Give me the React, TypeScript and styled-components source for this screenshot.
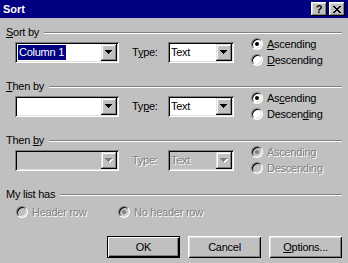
import { createGlobalStyle, styled } from 'styled-components';

const GlobalStyle = createGlobalStyle`
  html, body {
    margin: 0;
    padding: 0;
    background: #c0c0c0;
  }
  body {
    font-family: "Liberation Sans", Arial, sans-serif;
    font-size: 11px;
    letter-spacing: -0.25px;
    color: #000;
  }
`;

const Window = styled.div`
  width: 348px;
  height: 263px;
  background: #c0c0c0;
  display: flex;
  flex-direction: column;
  overflow: hidden;
`;

const TitleBar = styled.div`
  height: 18px;
  background: #000080;
  display: flex;
  align-items: center;
  padding: 0 3px 0 3px;
`;

const Title = styled.span`
  flex: 1;
  color: #fff;
  font-weight: bold;
  font-size: 11px;
  letter-spacing: 0;
`;

const TitleButtons = styled.div`
  display: flex;
  gap: 2px;
`;

const TitleButton = styled.div`
  width: 16px;
  height: 14px;
  background: #c0c0c0;
  display: flex;
  align-items: center;
  justify-content: center;
  font-weight: bold;
  font-size: 11px;
  line-height: 14px;
  box-shadow: inset -1px -1px #000, inset 1px 1px #fff, inset -2px -2px #808080, inset 2px 2px #dfdfdf;
`;

const Body = styled.div`
  display: flex;
  flex-direction: column;
  gap: 12px;
  padding: 8px 6px 0 6px;
`;

const Section = styled.section`
  display: flex;
  flex-direction: column;
`;

const Legend = styled.div`
  display: flex;
  align-items: center;
  height: 13px;
  line-height: 13px;

  &::after {
    content: '';
    flex: 1;
    margin-left: 5px;
    border-top: 1px solid #808080;
    border-bottom: 1px solid #fff;
  }
`;

const Key = styled.span`
  text-decoration: underline;
`;

const SortRow = styled.div`
  display: flex;
  align-items: center;
  height: 32px;
  margin-top: -3px;
  padding-left: 9px;
`;

const Combo = styled.div<{ $width: number; $disabled?: boolean; $gap: number }>`
  width: ${(p) => p.$width}px;
  height: 21px;
  margin-right: ${(p) => p.$gap}px;
  box-sizing: border-box;
  padding: 2px;
  display: flex;
  flex: none;
  background: ${(p) => (p.$disabled ? '#c0c0c0' : '#fff')};
  box-shadow: inset 1px 1px #808080, inset -1px -1px #fff, inset 2px 2px #000, inset -2px -2px #dfdfdf;
`;

const ComboText = styled.div<{ $disabled?: boolean }>`
  flex: 1;
  display: flex;
  align-items: center;
  padding-left: 1px;
  color: ${(p) => (p.$disabled ? '#808080' : '#000')};
  text-shadow: ${(p) => (p.$disabled ? '1px 1px 0 #fff' : 'none')};
`;

const Selected = styled.span`
  display: inline-flex;
  align-items: center;
  height: 15px;
  background: #000080;
  color: #fff;
  padding: 0 2px 0 1px;
`;

const DropButton = styled.div`
  width: 16px;
  height: 17px;
  background: #c0c0c0;
  display: flex;
  align-items: center;
  justify-content: center;
  box-shadow: inset -1px -1px #000, inset 1px 1px #dfdfdf, inset -2px -2px #808080, inset 2px 2px #fff;
`;

const FieldLabel = styled.span<{ $disabled?: boolean }>`
  width: 36px;
  flex: none;
  color: ${(p) => (p.$disabled ? '#808080' : '#000')};
  text-shadow: ${(p) => (p.$disabled ? '1px 1px 0 #fff' : 'none')};
`;

const RadioGroup = styled.div`
  display: flex;
  flex-direction: column;
`;

const RadioLine = styled.label<{ $disabled?: boolean; $width?: number }>`
  display: flex;
  align-items: center;
  gap: 4px;
  height: 16px;
  width: ${(p) => (p.$width ? `${p.$width}px` : 'auto')};
  color: ${(p) => (p.$disabled ? '#808080' : '#000')};
  text-shadow: ${(p) => (p.$disabled ? '1px 1px 0 #fff' : 'none')};
`;

const RadioMark = styled.span<{ $checked?: boolean; $disabled?: boolean }>`
  position: relative;
  width: 12px;
  height: 12px;
  flex: none;
  box-sizing: border-box;
  border-radius: 50%;
  border: 1px solid;
  border-color: #808080 #fff #fff #808080;
  background: ${(p) => (p.$disabled ? '#c0c0c0' : '#fff')};
  box-shadow: inset 1px 1px #000, inset -1px -1px #dfdfdf;

  &::after {
    content: '';
    display: ${(p) => (p.$checked ? 'block' : 'none')};
    position: absolute;
    left: 3px;
    top: 3px;
    width: 4px;
    height: 4px;
    border-radius: 50%;
    background: ${(p) => (p.$disabled ? '#808080' : '#000')};
  }
`;

const HeaderRow = styled.div`
  display: flex;
  margin-top: 3px;
  padding-left: 10px;
`;

const ButtonRow = styled.div`
  display: flex;
  justify-content: flex-end;
  gap: 8px;
  margin-top: 4px;
`;

const Button = styled.button<{ $default?: boolean }>`
  width: 73px;
  height: 22px;
  padding: 0;
  font: inherit;
  letter-spacing: inherit;
  color: #000;
  background: #c0c0c0;
  border: ${(p) => (p.$default ? '1px solid #000' : 'none')};
  box-shadow: ${(p) =>
    p.$default
      ? 'inset 1px 1px #fff, inset -1px -1px #000, inset -2px -2px #808080'
      : 'inset 1px 1px #fff, inset -1px -1px #000, inset 2px 2px #dfdfdf, inset -2px -2px #808080'};
`;

function Arrow({ disabled }: { disabled?: boolean }) {
  const d = 'M0 0h7v1H0zM1 1h5v1H1zM2 2h3v1H2zM3 3h1v1H3z';
  return (
    <svg width="8" height="5" viewBox="0 0 8 5" shapeRendering="crispEdges">
      {disabled && <path d={d} fill="#fff" transform="translate(1 1)" />}
      <path d={d} fill={disabled ? '#808080' : '#000'} />
    </svg>
  );
}

function CloseGlyph() {
  return (
    <svg width="8" height="7" viewBox="0 0 8 7" shapeRendering="crispEdges">
      <path
        d="M0 0h2v1H0zM6 0h2v1H6zM1 1h2v1H1zM5 1h2v1H5zM2 2h4v1H2zM3 3h2v1H3zM2 4h4v1H2zM1 5h2v1H1zM5 5h2v1H5zM0 6h2v1H0zM6 6h2v1H6z"
        fill="#000"
      />
    </svg>
  );
}

function Mnemonic({ text, at }: { text: string; at: number }) {
  if (at < 0) return <>{text}</>;
  return (
    <>
      {text.slice(0, at)}
      <Key>{text[at]}</Key>
      {text.slice(at + 1)}
    </>
  );
}

type SortSectionProps = {
  label: string;
  labelKey: number;
  value?: string;
  typeKey: number;
  ascKey: number;
  descKey: number;
  disabled?: boolean;
};

function SortSection({ label, labelKey, value, typeKey, ascKey, descKey, disabled }: SortSectionProps) {
  return (
    <Section>
      <Legend>
        <span>
          <Mnemonic text={label} at={labelKey} />
        </span>
      </Legend>
      <SortRow>
        <Combo $width={104} $gap={13} $disabled={disabled}>
          <ComboText>{value && <Selected>{value}</Selected>}</ComboText>
          <DropButton>
            <Arrow disabled={disabled} />
          </DropButton>
        </Combo>
        <FieldLabel $disabled={disabled}>
          <Mnemonic text="Type:" at={typeKey} />
        </FieldLabel>
        <Combo $width={66} $gap={17} $disabled={disabled}>
          <ComboText $disabled={disabled}>Text</ComboText>
          <DropButton>
            <Arrow disabled={disabled} />
          </DropButton>
        </Combo>
        <RadioGroup>
          <RadioLine $disabled={disabled}>
            <RadioMark $checked $disabled={disabled} />
            <span>
              <Mnemonic text="Ascending" at={ascKey} />
            </span>
          </RadioLine>
          <RadioLine $disabled={disabled}>
            <RadioMark $disabled={disabled} />
            <span>
              <Mnemonic text="Descending" at={descKey} />
            </span>
          </RadioLine>
        </RadioGroup>
      </SortRow>
    </Section>
  );
}

export default function App() {
  return (
    <>
      <GlobalStyle />
      <Window>
        <TitleBar>
          <Title>Sort</Title>
          <TitleButtons>
            <TitleButton>?</TitleButton>
            <TitleButton>
              <CloseGlyph />
            </TitleButton>
          </TitleButtons>
        </TitleBar>
        <Body>
          <SortSection label="Sort by" labelKey={0} value="Column 1" typeKey={1} ascKey={0} descKey={0} />
          <SortSection label="Then by" labelKey={0} typeKey={2} ascKey={2} descKey={6} />
          <SortSection label="Then by" labelKey={5} typeKey={-1} ascKey={-1} descKey={-1} disabled />
          <Section>
            <Legend>
              <span>My list has</span>
            </Legend>
            <HeaderRow>
              <RadioLine $disabled $width={102}>
                <RadioMark $disabled />
                <span>Header row</span>
              </RadioLine>
              <RadioLine $disabled>
                <RadioMark $checked $disabled />
                <span>No header row</span>
              </RadioLine>
            </HeaderRow>
          </Section>
          <ButtonRow>
            <Button $default>OK</Button>
            <Button>Cancel</Button>
            <Button>
              <Mnemonic text="Options..." at={0} />
            </Button>
          </ButtonRow>
        </Body>
      </Window>
    </>
  );
}
